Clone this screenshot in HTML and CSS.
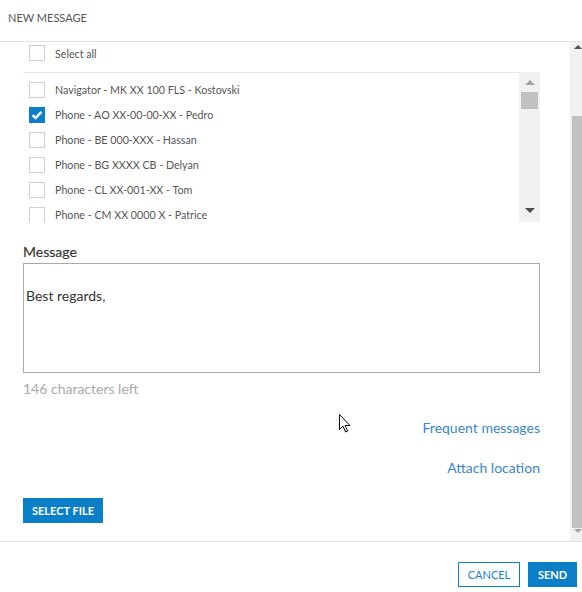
FILE: index.html
```html
<!DOCTYPE html>
<html>
<head>
<meta charset="utf-8">
<link rel="stylesheet" href="styles.css">
</head>
<body>
<div class="dialog">
  <div class="header">NEW MESSAGE</div>
  <div class="content">
    <div class="body">
      <div class="select-all">
        <span class="cb"></span><span class="label">Select all</span>
      </div>
      <div class="list">
        <div class="items">
          <div class="row"><span class="cb"></span><span class="label">Navigator - MK XX 100 FLS - Kostovski</span></div>
          <div class="row"><span class="cb checked"><svg width="16" height="16" viewBox="0 0 16 16"><path d="M3.6 8.2 L6.6 11 L12.4 4.9" fill="none" stroke="#fff" stroke-width="2.4"/></svg></span><span class="label">Phone - AO XX-00-00-XX - Pedro</span></div>
          <div class="row"><span class="cb"></span><span class="label">Phone - BE 000-XXX - Hassan</span></div>
          <div class="row"><span class="cb"></span><span class="label">Phone - BG XXXX CB - Delyan</span></div>
          <div class="row"><span class="cb"></span><span class="label">Phone - CL XX-001-XX - Tom</span></div>
          <div class="row"><span class="cb"></span><span class="label">Phone - CM XX 0000 X - Patrice</span></div>
        </div>
        <div class="list-scroll">
          <div class="arrow-up light"></div>
          <div class="list-thumb"></div>
          <div class="spacer"></div>
          <div class="arrow-down dark"></div>
        </div>
      </div>
      <div class="msg-label">Message</div>
      <div class="textarea">
Best regards,</div>
      <div class="counter">146 characters left</div>
      <div class="links">
        <a class="link">Frequent messages</a>
        <a class="link">Attach location</a>
      </div>
      <div class="file-row"><button class="btn primary">SELECT FILE</button></div>
    </div>
    <div class="outer-scroll">
      <div class="o-up"></div>
      <div class="o-thumb"></div>
      <div class="o-down"></div>
    </div>
  </div>
  <div class="footer">
    <button class="btn outline">CANCEL</button>
    <button class="btn primary">SEND</button>
  </div>
  <svg class="cursor" width="12" height="19" viewBox="0 0 12 19"><path d="M0.5 0.5 L0.5 15.5 L4 12.2 L6.6 18 L8.6 17.1 L6.1 11.5 L10.9 11.5 Z" fill="#fff" stroke="#000" stroke-width="1" stroke-linejoin="miter"/></svg>
</div>
</body>
</html>
```

FILE: styles.css
```css
* { box-sizing: border-box; }
html, body { margin: 0; padding: 0; background: #fff; }
body { font-family: Lato, "Open Sans", sans-serif; color: #333; }

.dialog {
  position: relative;
  width: 582px;
  height: 592px;
  display: flex;
  flex-direction: column;
  overflow: hidden;
}

.header {
  height: 42px;
  border-bottom: 1px solid #e3e3e3;
  padding: 11px 0 0 8px;
  font-size: 11px;
  line-height: 14px;
  color: #555;
}

.content {
  height: 499px;
  display: flex;
}

.body {
  flex: 1;
  padding: 0 30px 0 23px;
  overflow: hidden;
}

.select-all {
  height: 30px;
  display: flex;
  align-items: center;
  padding-left: 6px;
  padding-bottom: 8px;
}

.cb {
  width: 16px;
  height: 16px;
  border: 1px solid #cfcfcf;
  background: #fff;
  flex: none;
  display: block;
}
.cb.checked {
  background: #0a7fc8;
  border-color: #0a7fc8;
  position: relative;
}
.cb.checked svg { position: absolute; left: -1px; top: -1px; }

.label {
  margin-left: 10px;
  font-size: 10.7px;
  color: #555;
  white-space: nowrap;
}

.list {
  height: 150px;
  display: flex;
}
.items {
  flex: 1;
  border-top: 1px solid #e6e6e6;
  padding: 4px 0 0 6px;
  overflow: hidden;
}
.row {
  height: 25px;
  display: flex;
  align-items: center;
}

.list-scroll {
  width: 21px;
  background: #f1f1f1;
  display: flex;
  flex-direction: column;
  align-items: center;
  padding: 8px 0 8px 0;
}
.arrow-up {
  width: 0; height: 0;
  border-left: 5px solid transparent;
  border-right: 5px solid transparent;
  border-bottom: 5px solid #a3a3a3;
}
.list-thumb {
  width: 17px;
  height: 17px;
  background: #c1c1c1;
  margin-top: 7px;
}
.spacer { flex: 1; }
.arrow-down {
  width: 0; height: 0;
  border-left: 5px solid transparent;
  border-right: 5px solid transparent;
  border-top: 5px solid #505050;
  margin-bottom: 1px;
}

.msg-label {
  margin-top: 21px;
  font-size: 14px;
  line-height: 17px;
  color: #333;
  height: 20px;
  -webkit-text-stroke: 0.15px #333;
}

.textarea {
  height: 110px;
  border: 1px solid #aaa;
  padding: 6px 2px;
  font-size: 14px;
  line-height: 17px;
  color: #333;
  white-space: pre;
}

.counter {
  margin-top: 7px;
  font-size: 14px;
  line-height: 17px;
  color: #aaa;
}

.links {
  display: flex;
  flex-direction: column;
  align-items: flex-end;
  margin-top: 22px;
  gap: 23px;
}
.link {
  font-size: 14px;
  line-height: 17px;
  color: #3b86c6;
}

.file-row { margin-top: 22px; }

.btn {
  height: 25px;
  font-family: Lato, "Open Sans", sans-serif;
  font-size: 11px;
  border: 1px solid #0a7fc8;
  padding: 0 7px;
  margin: 0;
  cursor: default;
  display: block;
}
.btn.primary {
  background: #0a7fc8;
  color: #fff;
  font-weight: bold;
}
.btn.outline {
  background: #fff;
  color: #1a7fc6;
}
.file-row .btn { width: 80px; padding: 0; }

.outer-scroll {
  width: 12px;
  background: #f1f1f1;
  position: relative;
}
.o-up {
  position: absolute;
  left: 4px; top: 3px;
  width: 0; height: 0;
  border-left: 4px solid transparent;
  border-right: 4px solid transparent;
  border-bottom: 4px solid #505050;
}
.o-thumb {
  position: absolute;
  left: 2px; right: 0;
  top: 74px; height: 412px;
  background: #c1c1c1;
}
.o-down {
  position: absolute;
  left: 4px; top: 487px;
  width: 0; height: 0;
  border-left: 4px solid transparent;
  border-right: 4px solid transparent;
  border-top: 4px solid #a3a3a3;
}

.footer {
  flex: 1;
  border-top: 1px solid #e3e3e3;
  display: flex;
  justify-content: flex-end;
  align-items: flex-start;
  gap: 8px;
  padding: 20px 5px 0 0;
}
.footer .outline { width: 62px; padding: 0; }
.footer .primary { width: 49px; padding: 0; }

.cursor {
  position: absolute;
  left: 339px;
  top: 414px;
}
```
